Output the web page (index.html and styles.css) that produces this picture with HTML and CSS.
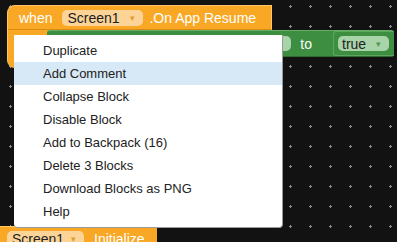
FILE: index.html
```html
<!DOCTYPE html>
<html lang="en">
<head>
<meta charset="UTF-8">
<title>Blocks Editor</title>
<link rel="stylesheet" href="styles.css">
</head>
<body>
<div class="workspace">
  <svg class="grid" width="397" height="242">
    <defs>
      <pattern id="dots" width="20" height="20" patternUnits="userSpaceOnUse">
        <rect x="9" y="6" width="3" height="1" fill="#8c8c8c"/>
        <rect x="10" y="5" width="1" height="3" fill="#8c8c8c"/>
      </pattern>
    </defs>
    <rect width="397" height="242" fill="url(#dots)"/>
  </svg>

  <!-- when Screen1.OnAppResume -->
  <div class="block event">
    <div class="block-head">
      <span class="label">when</span>
      <span class="dropdown">Screen1 <span class="arrow">&#9662;</span></span>
      <span class="label">.On App Resume</span>
    </div>
  </div>

  <!-- set ... to true -->
  <div class="block setter">
    <span class="field-end"></span>
    <span class="label to">to</span>
    <div class="block logic">
      <span class="dropdown green">true <span class="arrow">&#9662;</span></span>
    </div>
  </div>

  <!-- Screen1.Initialize -->
  <div class="block init">
    <span class="dropdown">Screen1 <span class="arrow">&#9662;</span></span>
    <span class="label">Initialize</span>
  </div>

  <!-- context menu -->
  <ul class="menu">
    <li>Duplicate</li>
    <li class="active">Add Comment</li>
    <li>Collapse Block</li>
    <li>Disable Block</li>
    <li>Add to Backpack (16)</li>
    <li>Delete 3 Blocks</li>
    <li>Download Blocks as PNG</li>
    <li>Help</li>
  </ul>
</div>
</body>
</html>
```

FILE: styles.css
```css
body {
  margin: 0;
  background-color: #121212;
  font-family: "Liberation Sans", Arial, sans-serif;
}

.workspace {
  position: relative;
  width: 397px;
  height: 242px;
  overflow: hidden;
  background-color: #121212;
}

.grid {
  position: absolute;
  left: 0;
  top: 0;
}

.block {
  position: absolute;
  box-sizing: border-box;
}

.label {
  color: #fff;
  font-size: 14px;
  white-space: nowrap;
}

.dropdown {
  display: inline-flex;
  align-items: center;
  height: 16px;
  padding: 0 6px 0 5px;
  border-radius: 5px;
  background-color: #fcd498;
  color: #222;
  font-size: 14px;
  white-space: nowrap;
}

.dropdown .arrow {
  margin-left: auto;
  font-size: 9px;
  color: #e79a2c;
}

.event {
  left: 7px;
  top: 5px;
  width: 265px;
  height: 63px;
  background-color: #f9a826;
  border-top: 1px solid #fdc767;
  border-left: 1px solid #fdc767;
  border-radius: 8px 0 0 8px;
}

.block-head {
  display: flex;
  align-items: center;
  height: 23px;
  padding-left: 11px;
  border-bottom: 1px solid #d98b12;
  border-right: 1px solid #fdc767;
}

.block-head .dropdown {
  width: 81px;
  box-sizing: border-box;
  padding-right: 8px;
  margin: 0 6px 0 10px;
}

.setter {
  left: 47px;
  top: 30px;
  width: 347px;
  height: 27px;
  display: flex;
  align-items: center;
  background-color: #3e8e41;
  border-top: 1px solid #65ad67;
  border-bottom: 1px solid #2c6b2e;
  border-radius: 3px;
}

.field-end {
  width: 60px;
  height: 15px;
  margin-left: auto;
  border-radius: 5px;
  background-color: #a9d3a9;
}

.to {
  margin: 0 12px 0 9px;
}

.logic {
  position: static;
  display: flex;
  align-items: center;
  width: 61px;
  height: 25px;
  margin-left: 9px;
  padding-left: 4px;
  background-color: #3e8e41;
  border: 1px solid #5ea660;
  border-right: none;
  border-radius: 3px 0 0 3px;
}

.dropdown.green {
  width: 51px;
  height: 15px;
  box-sizing: border-box;
  padding: 0 8px 0 4px;
  background-color: #a9d3a9;
  color: #222;
}

.dropdown.green .arrow {
  color: #4f9a51;
}

.init {
  left: 0;
  top: 226px;
  width: 157px;
  height: 24px;
  display: flex;
  align-items: flex-start;
  padding: 4px 0 0 7px;
  background-color: #f9a826;
  border-top: 1px solid #fdc767;
}

.init .dropdown {
  width: 77px;
  box-sizing: border-box;
  padding-right: 8px;
  margin-right: 10px;
}

.menu {
  position: absolute;
  left: 14px;
  top: 35px;
  width: 269px;
  height: 193px;
  box-sizing: border-box;
  margin: 0;
  padding: 4px 0 0;
  list-style: none;
  background-color: #fff;
  border-right: 1px solid #9a9a9a;
  border-bottom: 1px solid #9a9a9a;
  border-radius: 0 0 4px 4px;
}

.menu li {
  height: 23px;
  line-height: 23px;
  padding-left: 29px;
  font-size: 13px;
  color: #222;
}

.menu li.active {
  background-color: #d7e8f7;
}
```
